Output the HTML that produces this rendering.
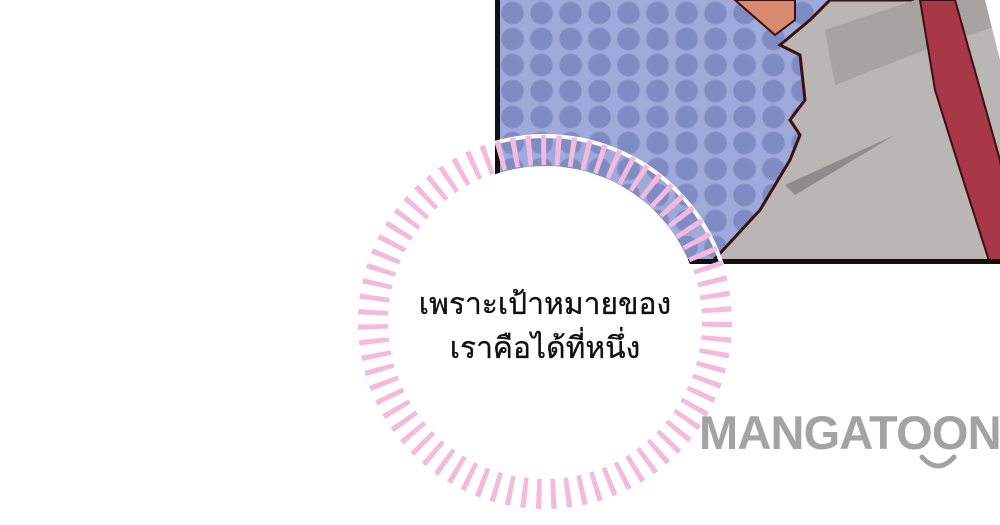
<!DOCTYPE html>
<html><head><meta charset="utf-8"><style>
body{margin:0;width:1000px;height:525px;background:#fff;position:relative;overflow:hidden;font-family:"Liberation Sans",sans-serif}
#panel{position:absolute;left:495px;top:-10px;width:520px;height:274px;border:5px solid #111;box-sizing:border-box;overflow:hidden;
background:#9eaadb;background-image:radial-gradient(circle,#7f8bc3 10.5px,transparent 12px);background-size:29px 26px;background-position:-2px 5px}
.t{position:absolute;left:345px;width:400px;text-align:center;font-size:30px;color:#111;line-height:44px;-webkit-text-stroke:0.3px #111}
#logo{position:absolute;left:699px;top:405px;font-size:47px;font-weight:bold;color:#a3a3a3;letter-spacing:-0.8px}
</style></head><body>
<div id="panel">
<svg width="520" height="274" style="position:absolute;left:-5px;top:-5px">
<polygon points="217,272 265,220 295,170 305,145 295,130 310,110 305,65 285,55 315,30 335,10 520,10 520,272" fill="#b9b6b3" stroke="#3a1010" stroke-width="3"/>
<polygon points="290,195 400,145 300,205" fill="#8e8c8a"/>
<polygon points="330,40 420,10 520,10 520,30 430,60 340,95" fill="#a6a3a0"/>
<polygon points="425,10 460,10 505,170 520,260 520,274 495,274 465,180 440,100" fill="#a83848" stroke="#3a1010" stroke-width="2"/>
<polygon points="490,10 520,10 520,130" fill="#fff"/>
<polygon points="240,10 300,10 300,30 280,45" fill="#d88a70" stroke="#3a1010" stroke-width="2"/>
</svg>
</div>
<svg width="1000" height="525" style="position:absolute;left:0;top:0">
<circle cx="545" cy="322" r="186" fill="none" stroke="#fff" stroke-width="4"/>
<circle cx="545" cy="322" r="172" fill="none" stroke="#f4bade" stroke-width="30" stroke-dasharray="5 9.4"/>
<circle cx="545" cy="322" r="156" fill="#fff"/>
</svg>
<div class="t" style="top:283px">เพราะเป้าหมายของ</div>
<div class="t" style="top:327px">เราคือได้ที่หนึ่ง</div>
<div id="logo">MANGATOON</div>
<svg width="40" height="20" style="position:absolute;left:918px;top:453px"><path d="M4 4 Q20 22 36 4" fill="none" stroke="#a3a3a3" stroke-width="5" stroke-linecap="round"/></svg>
</body></html>
